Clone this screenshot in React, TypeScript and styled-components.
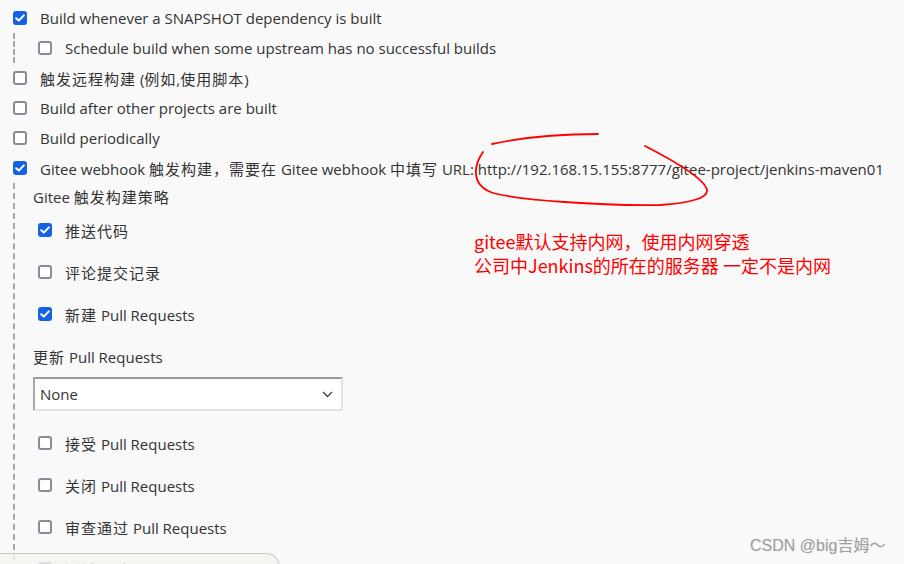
import styled, { createGlobalStyle } from "styled-components";

const GlobalStyle = createGlobalStyle`
  html, body {
    margin: 0;
    padding: 0;
    background: #f9f9f9;
  }
  body {
    width: 904px;
    height: 564px;
    overflow: hidden;
    font-family: "Open Sans", "Noto Sans CJK SC", sans-serif;
    font-size: 15px;
    color: #333;
  }
`;

const Page = styled.div`
  position: relative;
  width: 904px;
  height: 564px;
  padding: 3px 0 0 13px;
  box-sizing: border-box;
`;

const Row = styled.label<{ $height?: number }>`
  display: flex;
  align-items: center;
  gap: 13px;
  height: ${(p) => p.$height ?? 30}px;
  white-space: nowrap;
`;

const Nested = styled.div<{ $pad: number }>`
  border-left: 2px dashed #a8a8a8;
  padding-left: ${(p) => p.$pad}px;
`;

const Box = styled.span<{ $checked?: boolean }>`
  flex-shrink: 0;
  width: 14px;
  height: 14px;
  box-sizing: border-box;
  border-radius: 3px;
  border: ${(p) => (p.$checked ? "none" : "2px solid #8a8a98")};
  background: ${(p) => (p.$checked ? "#1462e4" : "#fff")};
  display: flex;
  align-items: center;
  justify-content: center;

  svg {
    display: block;
  }
`;

const Cjk = styled.span`
  letter-spacing: 1px;
`;

const SubList = styled.div`
  padding-left: 5px;
`;

const GroupLabel = styled.div<{ $height: number }>`
  display: flex;
  align-items: center;
  height: ${(p) => p.$height}px;
  white-space: nowrap;
`;

const Select = styled.div`
  width: 310px;
  height: 34px;
  box-sizing: border-box;
  background: #fff;
  border-top: 2px solid #9a9a9a;
  border-left: 2px solid #a8a8a8;
  border-right: 2px solid #e2e2e2;
  border-bottom: 2px solid #e2e2e2;
  display: flex;
  align-items: center;
  justify-content: space-between;
  padding: 0 8px 0 5px;
  margin-bottom: 11px;
  font-size: 15px;
`;

const Annotation = styled.div`
  position: absolute;
  left: 474px;
  top: 229px;
  color: #ff0000;
  font-family: "Noto Sans CJK SC", "Noto Sans", sans-serif;
  font-size: 18px;
  line-height: 24px;
  white-space: nowrap;
`;

const Scribble = styled.svg`
  position: absolute;
  left: 0;
  top: 0;
  pointer-events: none;
`;

const Watermark = styled.div`
  position: absolute;
  left: 750px;
  top: 532px;
  color: #a0a0a0;
  font-family: "Liberation Sans", "Noto Sans CJK SC", sans-serif;
  font-size: 16px;
  text-shadow: 0 0 1px rgba(0, 0, 0, 0.12);
  white-space: nowrap;
`;

const BottomBar = styled.div`
  position: absolute;
  left: 0;
  top: 553px;
  width: 280px;
  height: 30px;
  box-sizing: border-box;
  border: 1px solid #b9cdc0;
  border-left: none;
  border-top-right-radius: 14px;
  background: rgba(244, 245, 238, 0.78);
`;

// wrap runs of CJK characters so they get the wider advance of the original font
const withCjk = (text: string) =>
  text
    .split(/([\u3000-\u9fff\uff00-\uffef]+)/)
    .map((part, i) =>
      /[\u3000-\u9fff\uff00-\uffef]/.test(part) ? (
        <Cjk key={i}>{part}</Cjk>
      ) : (
        part
      )
    );

const Check = () => (
  <svg width="10" height="8" viewBox="0 0 10 8">
    <path
      d="M1.2 4.2 L3.8 6.6 L8.8 1.4"
      fill="none"
      stroke="#fff"
      strokeWidth="2"
      strokeLinecap="round"
      strokeLinejoin="round"
    />
  </svg>
);

const Option = ({
  label,
  checked,
  height,
}: {
  label: string;
  checked?: boolean;
  height?: number;
}) => (
  <Row $height={height}>
    <Box $checked={checked}>{checked && <Check />}</Box>
    <span>{withCjk(label)}</span>
  </Row>
);

export default function App() {
  return (
    <>
      <GlobalStyle />
      <Page>
        <Option label="Build whenever a SNAPSHOT dependency is built" checked />
        <Nested $pad={23}>
          <Option label="Schedule build when some upstream has no successful builds" />
        </Nested>
        <Option label="触发远程构建 (例如,使用脚本)" />
        <Option label="Build after other projects are built" />
        <Option label="Build periodically" />
        <Option
          label="Gitee webhook 触发构建，需要在 Gitee webhook 中填写 URL: http://192.168.15.155:8777/gitee-project/jenkins-maven01"
          checked
        />
        <Nested $pad={18}>
          <GroupLabel $height={26}>
            <span>{withCjk("Gitee 触发构建策略")}</span>
          </GroupLabel>
          <SubList>
            <Option label="推送代码" checked height={42} />
            <Option label="评论提交记录" height={42} />
            <Option label="新建 Pull Requests" checked height={42} />
          </SubList>
          <GroupLabel $height={42}>
            <span>{withCjk("更新 Pull Requests")}</span>
          </GroupLabel>
          <Select>
            <span>None</span>
            <svg width="11" height="7" viewBox="0 0 11 7">
              <path
                d="M1 1 L5.5 5.5 L10 1"
                fill="none"
                stroke="#444"
                strokeWidth="1.4"
              />
            </svg>
          </Select>
          <SubList>
            <Option label="接受 Pull Requests" height={42} />
            <Option label="关闭 Pull Requests" height={42} />
            <Option label="审查通过 Pull Requests" height={42} />
            <Option label="测试通过 Pull Requests" height={42} />
          </SubList>
        </Nested>

        <Scribble width="904" height="564" viewBox="0 0 904 564">
          <g fill="none" stroke="#ff0000" strokeWidth="1.8" strokeLinecap="round">
            <path d="M492 144 C 515 139, 545 134, 598 134" />
            <path d="M645 146 C 680 164, 705 180, 707 190 C 708 198, 690 203, 660 205 C 600 206, 520 200, 493 193 C 470 185, 474 165, 483 152" />
          </g>
        </Scribble>

        <Annotation>
          <div>gitee默认支持内网，使用内网穿透</div>
          <div>公司中Jenkins的所在的服务器 一定不是内网</div>
        </Annotation>

        <Watermark>CSDN @big吉姆～</Watermark>
        <BottomBar />
      </Page>
    </>
  );
}
